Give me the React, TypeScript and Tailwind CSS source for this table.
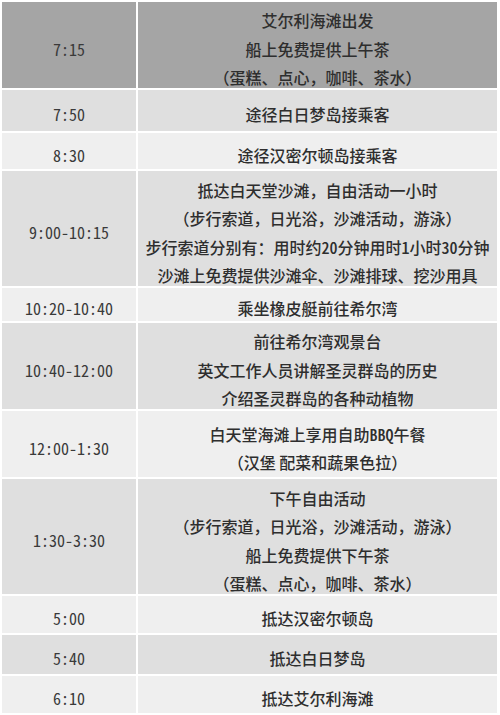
import React from "react";

type Row = { time: string; lines: string[]; h: string; bg: string };

const rows: Row[] = [
  { time: "7:15", lines: ["艾尔利海滩出发", "船上免费提供上午茶", "（蛋糕、点心，咖啡、茶水）"], h: "h-[86px]", bg: "bg-[#a5a5a5]" },
  { time: "7:50", lines: ["途径白日梦岛接乘客"], h: "h-[41px]", bg: "bg-[#dfdfdf]" },
  { time: "8:30", lines: ["途径汉密尔顿岛接乘客"], h: "h-[36px]", bg: "bg-[#efefef]" },
  {
    time: "9:00-10:15",
    lines: [
      "抵达白天堂沙滩，自由活动一小时",
      "（步行索道，日光浴，沙滩活动，游泳）",
      "步行索道分别有：用时约20分钟用时1小时30分钟",
      "沙滩上免费提供沙滩伞、沙滩排球、挖沙用具",
    ],
    h: "h-[115px]",
    bg: "bg-[#dfdfdf]",
  },
  { time: "10:20-10:40", lines: ["乘坐橡皮艇前往希尔湾"], h: "h-[33px]", bg: "bg-[#efefef]" },
  {
    time: "10:40-12:00",
    lines: ["前往希尔湾观景台", "英文工作人员讲解圣灵群岛的历史", "介绍圣灵群岛的各种动植物"],
    h: "h-[86px]",
    bg: "bg-[#dfdfdf]",
  },
  { time: "12:00-1:30", lines: ["白天堂海滩上享用自助BBQ午餐", "（汉堡 配菜和蔬果色拉）"], h: "h-[66px]", bg: "bg-[#efefef]" },
  {
    time: "1:30-3:30",
    lines: ["下午自由活动", "（步行索道，日光浴，沙滩活动，游泳）", "船上免费提供下午茶", "（蛋糕、点心，咖啡、茶水）"],
    h: "h-[115px]",
    bg: "bg-[#dfdfdf]",
  },
  { time: "5:00", lines: ["抵达汉密尔顿岛"], h: "h-[37px]", bg: "bg-[#efefef]" },
  { time: "5:40", lines: ["抵达白日梦岛"], h: "h-[39px]", bg: "bg-[#dfdfdf]" },
  { time: "6:10", lines: ["抵达艾尔利海滩"], h: "h-[37px]", bg: "bg-[#efefef]" },
];

function Line({ text }: { text: string }) {
  const parts = text.split(/([A-Za-z0-9:\-]+)/);
  return (
    <>
      {parts.map((p, i) =>
        /^[A-Za-z0-9:\-]+$/.test(p) ? (
          <span key={i} className="[font-feature-settings:'hwid']">
            {p}
          </span>
        ) : (
          <span key={i}>{p}</span>
        )
      )}
    </>
  );
}

export default function App() {
  return (
    <div className="w-[500px] h-[715px] overflow-hidden bg-white pt-[2px] pl-[2px] pr-[3px] [font-family:'Noto_Sans_CJK_SC','Noto_Sans',sans-serif] text-[16px] text-[#2e2e2e]">
      <div className="flex flex-col gap-[2px]">
        {rows.map((r, i) => (
          <div key={i} className={`flex gap-[2px] ${r.h}`}>
            <div className={`w-[134px] shrink-0 flex items-center justify-center pt-2 ${r.bg}`}>
              <span className="leading-[28.5px] font-normal text-[#3a3a3a] [font-feature-settings:'hwid']">{r.time}</span>
            </div>
            <div className={`flex-1 flex flex-col items-center justify-center pt-2 font-medium ${r.bg}`}>
              {r.lines.map((l, j) => (
                <div key={j} className="leading-[28.5px] whitespace-nowrap">
                  <Line text={l} />
                </div>
              ))}
            </div>
          </div>
        ))}
      </div>
    </div>
  );
}
